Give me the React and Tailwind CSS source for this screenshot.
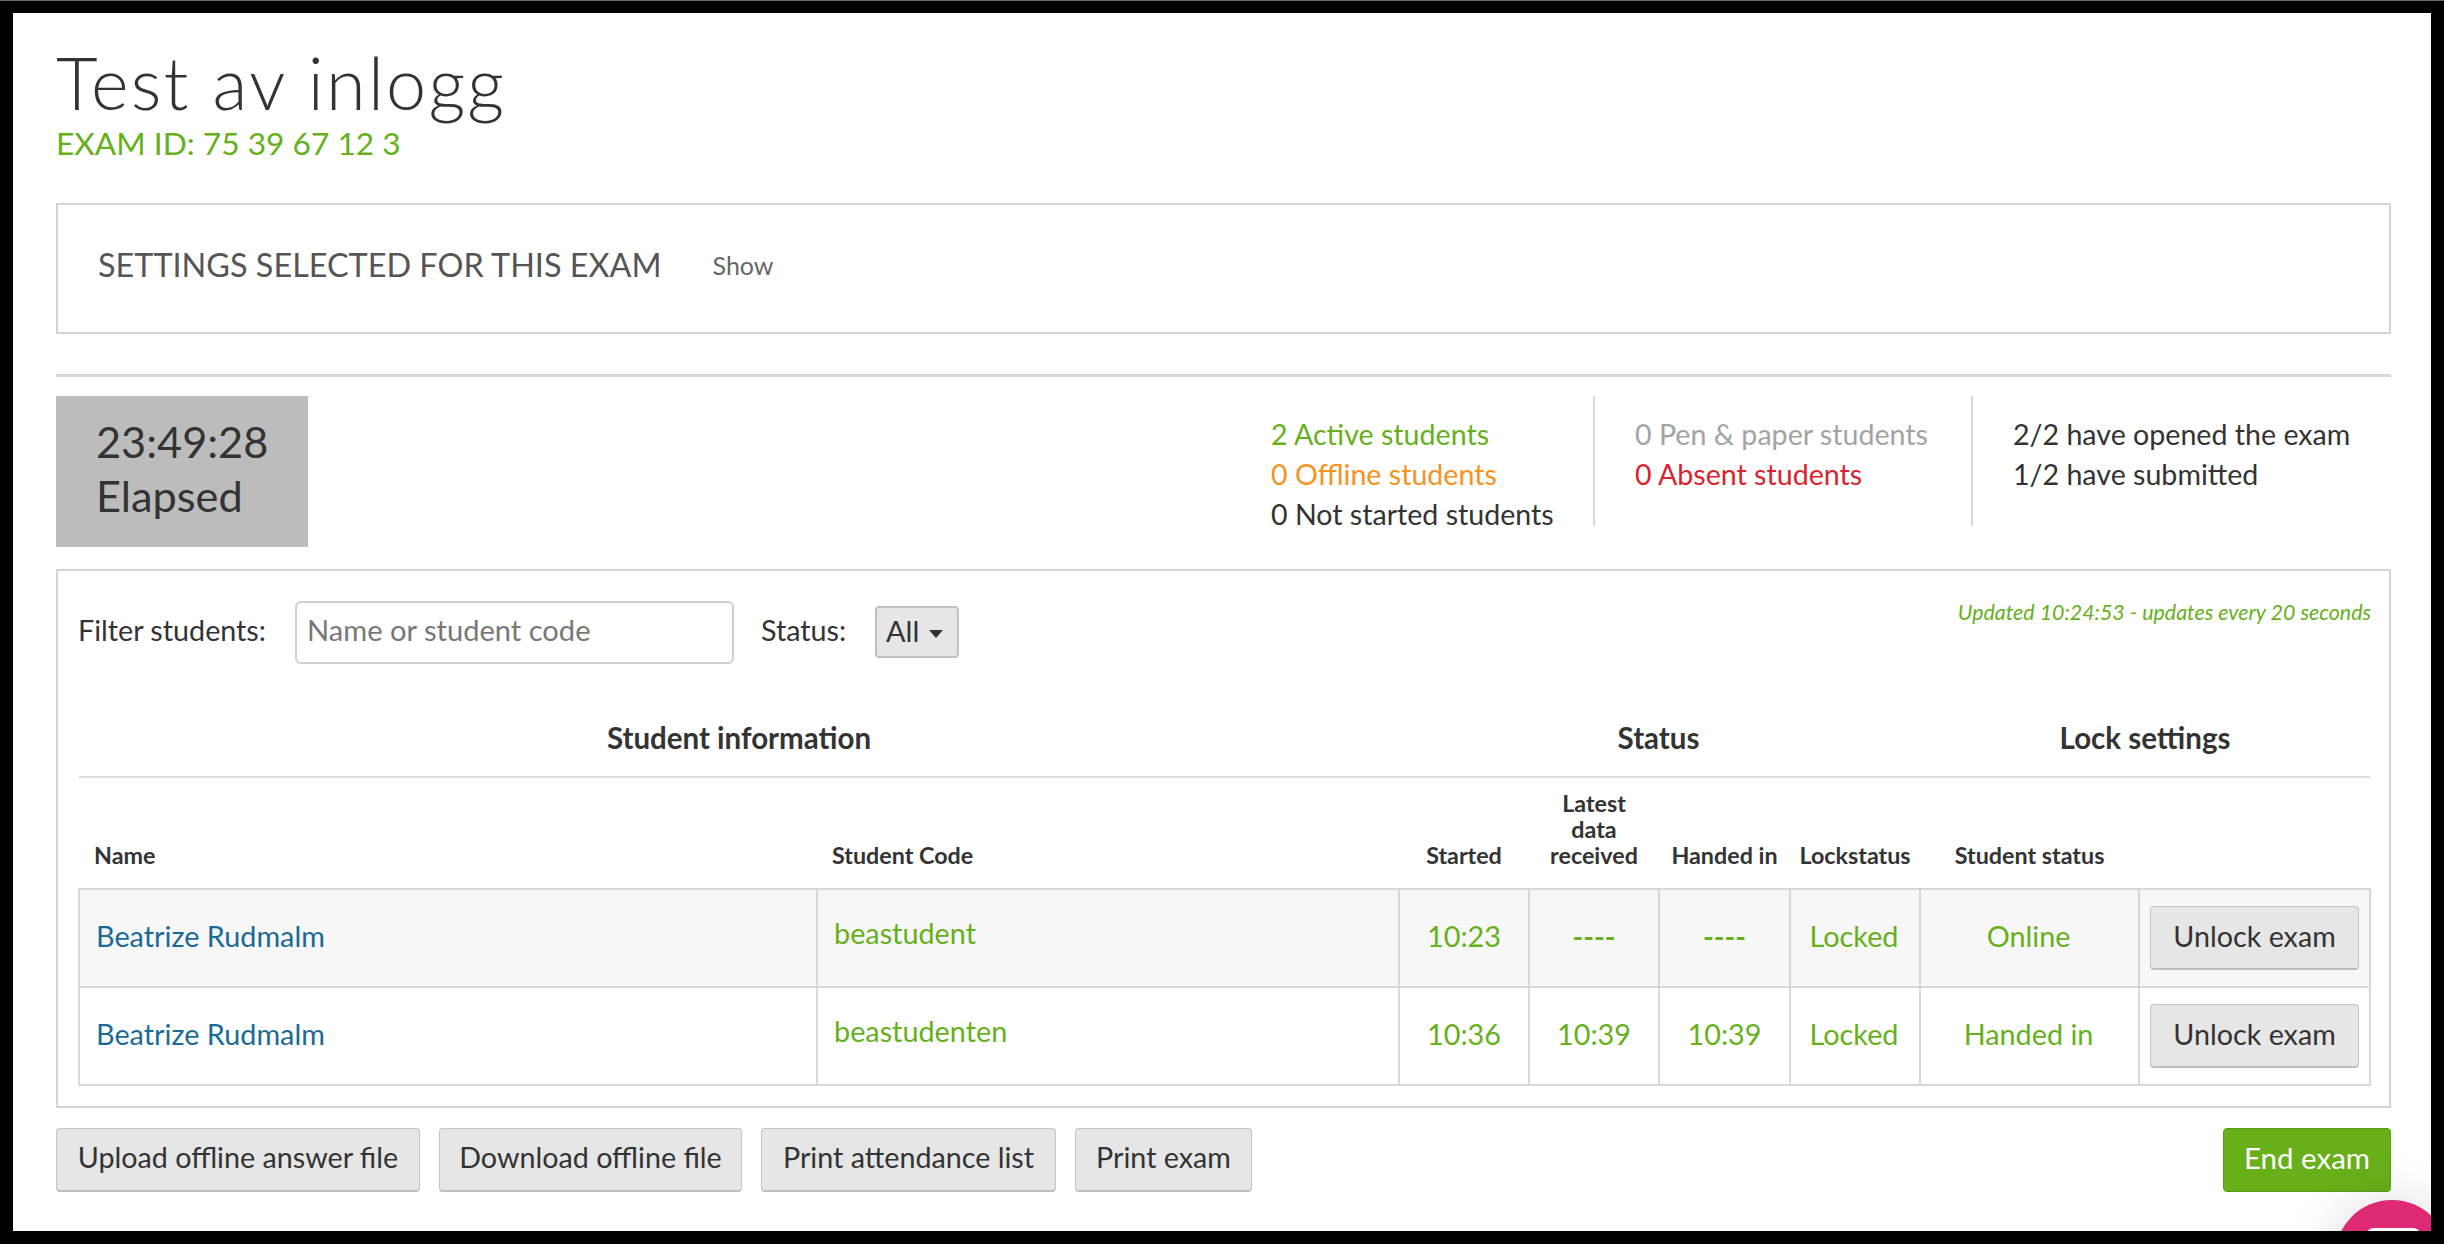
const rows = [
  { name: 'Beatrize Rudmalm', code: 'beastudent', started: '10:23', latest: '----', handed: '----', lock: 'Locked', status: 'Online', bg: 'bg-[#f7f7f7]' },
  { name: 'Beatrize Rudmalm', code: 'beastudenten', started: '10:36', latest: '10:39', handed: '10:39', lock: 'Locked', status: 'Handed in', bg: 'bg-white' },
]

const grayBtn = 'h-[64px] rounded-[4px] border border-[#c4c4c4] border-b-2 border-b-[#bdbdbd] bg-[#e6e6e6] pb-[3px] text-[28.7px] text-[#333]'
const td = 'border-2 border-[#d8d8d8] text-center align-middle text-[28.8px] leading-[40px]'
const cellText = 'pb-[4px] text-[#65b01b]'
const subTh = 'align-bottom pb-[20px] text-center text-[23.3px] leading-[26px] font-bold text-[#333]'

export default function App() {
  return (
    <div className="h-[1244px] w-[2444px] overflow-hidden border-t border-t-[#666] bg-black p-[13px] pt-[12px] font-[Lato,sans-serif] text-[#333]">
      <div className="relative h-[1218px] w-[2418px] overflow-hidden bg-white pl-[43px] pr-[40px]">
        <h1 className="pt-[29px] text-[72px] leading-[80px] font-light tracking-[2.3px] text-[#333]">Test av inlogg</h1>
        <div className="mt-[1px] text-[31.7px] leading-[40px] text-[#65b01b]">EXAM ID: 75 39 67 12 3</div>

        <div className="mt-[40px] flex h-[131px] items-center border-2 border-[#d4d4d4] pb-[6px] pl-[40px]">
          <span className="text-[32.4px] text-[#555]">SETTINGS SELECTED FOR THIS EXAM</span>
          <span className="ml-[51px] text-[25px] text-[#666]">Show</span>
        </div>

        <div className="mt-[40px] border-t-[3px] border-[#d8d8d8]" />

        <div className="mt-[19px] flex">
          <div className="h-[151px] w-[252px] bg-[#bcbcbc] pl-[40px] pt-[18px] text-[43.3px] leading-[54px] text-[#333]">
            <div>23:49:28</div>
            <div>Elapsed</div>
          </div>
          <div className="ml-auto flex text-[28.6px] leading-[40px]">
            <div className="h-[130px] w-[324px] border-r-2 border-[#d8d8d8] pt-[18px]">
              <div className="text-[#65b01b]">2 Active students</div>
              <div className="text-[#f7921e]">0 Offline students</div>
              <div className="whitespace-nowrap">0 Not started students</div>
            </div>
            <div className="h-[130px] w-[378px] border-r-2 border-[#d8d8d8] pl-[40px] pt-[18px]">
              <div className="text-[#a3a3a3]">0 Pen &amp; paper students</div>
              <div className="text-[#d9232e]">0 Absent students</div>
            </div>
            <div className="h-[130px] w-[418px] pl-[40px] pt-[18px]">
              <div>2/2 have opened the exam</div>
              <div>1/2 have submitted</div>
            </div>
          </div>
        </div>

        <div className="mt-[22px] h-[539px] border-2 border-[#d4d4d4] pl-[20px] pr-[18px] pt-[30px]">
          <div className="flex items-start">
            <label className="mt-[9px] w-[217px] text-[28.7px] leading-[40px]">Filter students:</label>
            <input
              placeholder="Name or student code"
              className="h-[63px] w-[439px] rounded-[6px] border-2 border-[#d0d0d0] bg-white px-[10px] pb-[6px] text-[29.1px] outline-none placeholder:text-[#777]"
            />
            <label className="ml-[27px] mt-[9px] w-[114px] text-[28.7px] leading-[40px]">Status:</label>
            <div className="mt-[5px] flex h-[52px] w-[84px] items-center rounded-[4px] border-2 border-[#c0c0c0] bg-[#e6e6e6] pb-[3px] pl-[9px] text-[29px]">
              All
              <span className="ml-[10px] mt-[6px] h-0 w-0 border-x-[7px] border-t-[8px] border-x-transparent border-t-[#333]" />
            </div>
            <div className="ml-auto mt-[-3px] text-[21.4px] leading-[28px] italic text-[#65b01b]">Updated 10:24:53 - updates every 20 seconds</div>
          </div>

          <table className="mt-[38px] w-[2291px] table-fixed border-collapse">
            <colgroup>
              <col className="w-[738px]" />
              <col className="w-[582px]" />
              <col className="w-[130px]" />
              <col className="w-[130px]" />
              <col className="w-[131px]" />
              <col className="w-[130px]" />
              <col className="w-[219px]" />
              <col className="w-[231px]" />
            </colgroup>
            <thead>
              <tr className="h-[75px] border-b-2 border-[#dedede] text-[29.5px] font-bold">
                <th colSpan={2} className="pb-[2px]">Student information</th>
                <th colSpan={4} className="pb-[2px] pr-[2px]">Status</th>
                <th colSpan={2} className="pb-[2px]">Lock settings</th>
              </tr>
              <tr className="h-[112px]">
                <th className={`${subTh} pl-[15px] text-left`}>Name</th>
                <th className={`${subTh} pl-[15px] text-left`}>Student Code</th>
                <th className={subTh}>Started</th>
                <th className={subTh}>Latest<br />data<br />received</th>
                <th className={subTh}>Handed in</th>
                <th className={subTh}>Lockstatus</th>
                <th className={subTh}>Student status</th>
                <th className={subTh} />
              </tr>
            </thead>
            <tbody>
              {rows.map((r) => (
                <tr key={r.code} className={`h-[98px] ${r.bg}`}>
                  <td className={`${td} pb-[4px] pl-[16px] text-left text-[#1b6a96]`}>{r.name}</td>
                  <td className={`${td} pb-[11px] pl-[16px] text-left text-[#65b01b]`}>{r.code}</td>
                  <td className={`${td} ${cellText}`}>{r.started}</td>
                  <td className={`${td} ${cellText} ${r.latest === '----' ? 'font-bold' : ''}`}>{r.latest}</td>
                  <td className={`${td} ${cellText} ${r.handed === '----' ? 'font-bold' : ''}`}>{r.handed}</td>
                  <td className={`${td} ${cellText} pr-[2px]`}>{r.lock}</td>
                  <td className={`${td} ${cellText} pr-[2px]`}>{r.status}</td>
                  <td className={td}>
                    <button className={`${grayBtn} w-[209px]`}>Unlock exam</button>
                  </td>
                </tr>
              ))}
            </tbody>
          </table>
        </div>

        <div className="mt-[20px] flex items-start gap-[19px]">
          <button className={`${grayBtn} w-[364px]`}>Upload offline answer file</button>
          <button className={`${grayBtn} w-[303px]`}>Download offline file</button>
          <button className={`${grayBtn} w-[295px]`}>Print attendance list</button>
          <button className={`${grayBtn} w-[177px]`}>Print exam</button>
          <button className="ml-auto h-[64px] w-[168px] rounded-[4px] border border-[#5c9c18] bg-[#67b01a] pb-[3px] text-[29.5px] text-white">End exam</button>
        </div>

        {/* chat launcher, cut off by the edge */}
        <div className="absolute left-[2322px] top-[1187px] h-[114px] w-[114px] rounded-full bg-[#de2a75] shadow-[0_0_50px_rgba(0,0,0,0.15)]">
          <div className="ml-[31px] mt-[28px] h-[40px] w-[55px] rounded-[8px] bg-white" />
        </div>
      </div>
    </div>
  )
}
